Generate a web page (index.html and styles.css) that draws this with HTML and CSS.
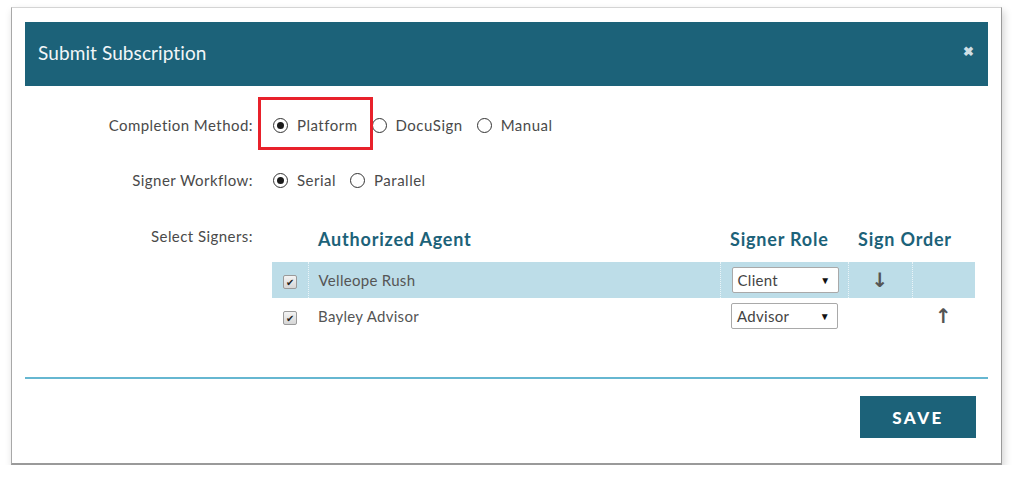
FILE: index.html
```html
<!DOCTYPE html>
<html>
<head>
<meta charset="utf-8">
<link rel="stylesheet" href="styles.css">
</head>
<body>
<div class="modal">
  <div class="modal-header">
    <span class="modal-title">Submit Subscription</span>
    <span class="close">&#10006;</span>
  </div>
  <div class="modal-body">
    <div class="form-row">
      <div class="label">Completion Method:</div>
      <div class="options highlight-wrap">
        <span class="opt"><span class="radio checked"></span>Platform</span>
        <span class="opt"><span class="radio"></span>DocuSign</span>
        <span class="opt"><span class="radio"></span>Manual</span>
        <span class="highlight"></span>
      </div>
    </div>
    <div class="form-row">
      <div class="label">Signer Workflow:</div>
      <div class="options">
        <span class="opt"><span class="radio checked"></span>Serial</span>
        <span class="opt"><span class="radio"></span>Parallel</span>
      </div>
    </div>
    <div class="signers">
      <div class="label top">Select Signers:</div>
      <table class="signer-table">
        <colgroup>
          <col class="w-check">
          <col class="w-name">
          <col class="w-role">
          <col class="w-order">
          <col class="w-order2">
        </colgroup>
        <thead>
          <tr>
            <th></th>
            <th class="pad">Authorized Agent</th>
            <th class="pad">Signer Role</th>
            <th class="pad" colspan="2">Sign Order</th>
          </tr>
        </thead>
        <tbody>
          <tr class="active">
            <td class="c-check"><span class="checkbox">&#10004;</span></td>
            <td class="pad">Velleope Rush</td>
            <td class="pad-role"><span class="select">Client<span class="caret">&#9660;</span></span></td>
            <td class="arrow">&#8595;</td>
            <td></td>
          </tr>
          <tr>
            <td class="c-check"><span class="checkbox">&#10004;</span></td>
            <td class="pad">Bayley Advisor</td>
            <td class="pad-role"><span class="select">Advisor<span class="caret">&#9660;</span></span></td>
            <td></td>
            <td class="arrow">&#8593;</td>
          </tr>
        </tbody>
      </table>
    </div>
  </div>
  <div class="divider"></div>
  <div class="modal-footer">
    <button class="save">SAVE</button>
  </div>
</div>
</body>
</html>
```
FILE: styles.css
```css
html, body {
  margin: 0;
  padding: 0;
  background: #ffffff;
}
body {
  font-family: "Lato", "Liberation Sans", sans-serif;
  color: #444;
}
.modal {
  margin: 7px 0 0 11px;
  width: 991px;
  height: 458px;
  border: 1px solid #d4d4d4;
  border-right-color: #9a9a9a;
  border-bottom: 2px solid #9a9a9a;
  border-left-color: #a8a8a8;
  box-shadow: 2px 4px 8px rgba(0,0,0,0.18);
  padding: 14px 13px 0 13px;
  box-sizing: border-box;
  display: flex;
  flex-direction: column;
  background: #fff;
}
.modal-header {
  height: 64px;
  background: #1c6279;
  display: flex;
  align-items: center;
  justify-content: space-between;
  padding: 0 14px 0 13px;
  flex-shrink: 0;
}
.modal-title {
  color: #f2f6f8;
  font-size: 19px;
  font-weight: 400;
  letter-spacing: 0.1px;
  margin-top: -3px;
}
.close {
  color: #cfdfe5;
  font-size: 13px;
  font-weight: bold;
  margin-top: -6px;
}
.modal-body {
  padding-top: 19px;
  display: flex;
  flex-direction: column;
  gap: 15px;
}
.form-row {
  display: flex;
  align-items: center;
  height: 40px;
  gap: 20px;
}
.label {
  width: 228px;
  flex-shrink: 0;
  text-align: right;
  font-size: 15px;
  letter-spacing: 0.45px;
  color: #4a4a4a;
}
.label.top {
  line-height: 20px;
  align-self: flex-start;
}
.options {
  display: flex;
  align-items: center;
  gap: 14px;
  font-size: 15px;
  letter-spacing: 0.5px;
  color: #4a4a4a;
}
.highlight-wrap {
  position: relative;
}
.highlight {
  position: absolute;
  left: -15px;
  top: -19px;
  width: 109px;
  height: 47px;
  border: 3px solid #e8212b;
}
.opt {
  display: inline-flex;
  align-items: center;
  gap: 9px;
}
.radio {
  width: 15px;
  height: 15px;
  box-sizing: border-box;
  border: 1.5px solid #333;
  border-radius: 50%;
  display: inline-flex;
  align-items: center;
  justify-content: center;
  background: #fff;
  flex-shrink: 0;
}
.radio.checked::after {
  content: "";
  width: 7px;
  height: 7px;
  border-radius: 50%;
  background: #1a1a1a;
}
.signers {
  display: flex;
  gap: 19px;
  margin-top: 11px;
}
.signer-table {
  border-collapse: collapse;
  table-layout: fixed;
  width: 703px;
  font-size: 15px;
}
.w-check { width: 36px; }
.w-name { width: 412px; }
.w-role { width: 128px; }
.w-order { width: 64px; }
.w-order2 { width: 63px; }
.signer-table th {
  height: 36px;
  vertical-align: top;
  line-height: 26px;
  text-align: left;
  color: #1c6279;
  font-size: 18px;
  font-weight: 700;
  letter-spacing: 0.8px;
  padding: 0;
  white-space: nowrap;
}
.signer-table td {
  height: 36px;
  padding: 0;
  color: #555;
  letter-spacing: 0.3px;
}
.signer-table th.pad, .signer-table td.pad {
  padding-left: 10px;
}
.signer-table td.pad-role {
  padding-left: 11px;
}
.signer-table tr.active td {
  background: #bddde8;
}
.signer-table tr.active td + td {
  border-left: 1px dotted #eaf4f8;
}
.c-check {
  text-align: center;
}
.arrow {
  text-align: center;
  font-size: 20px;
  font-weight: bold;
  color: #222;
  font-family: "DejaVu Sans", sans-serif;
}
.checkbox {
  display: inline-flex;
  align-items: center;
  justify-content: center;
  width: 12px;
  height: 12px;
  border: 1px solid #9a9a9a;
  border-radius: 2px;
  background: linear-gradient(#f4f4f4, #d6d6d6);
  font-size: 10px;
  color: #222;
  line-height: 1;
  letter-spacing: 0;
}
.select {
  display: flex;
  align-items: center;
  justify-content: space-between;
  width: 107px;
  height: 26px;
  box-sizing: border-box;
  border: 1px solid #a9a9a9;
  border-radius: 2px;
  background: #fff;
  padding: 0 7px 0 5px;
  font-size: 15px;
  color: #444;
}
.caret {
  font-size: 10px;
  color: #111;
}
.divider {
  height: 2px;
  background: #66b7d1;
  margin-top: 43px;
  flex-shrink: 0;
}
.modal-footer {
  display: flex;
  justify-content: flex-end;
  padding: 17px 12px 0 0;
}
.save {
  width: 116px;
  height: 42px;
  border: none;
  background: #1c6279;
  color: #fff;
  font-family: "Lato", "Liberation Sans", sans-serif;
  font-weight: 900;
  font-size: 17px;
  letter-spacing: 2.5px;
  padding: 0;
}
```
